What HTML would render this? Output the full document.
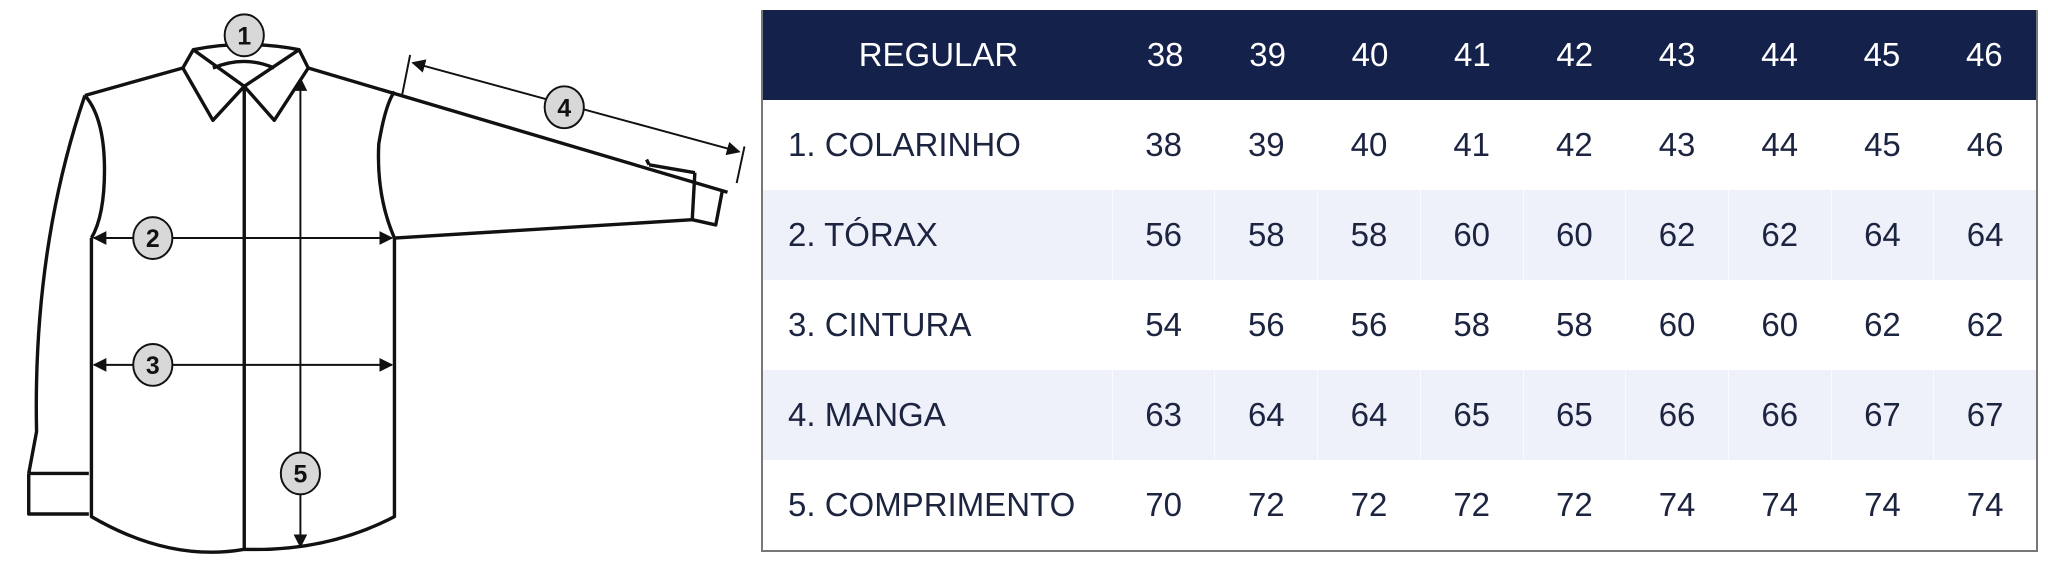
<!DOCTYPE html>
<html><head><meta charset="utf-8"><style>
html,body{margin:0;padding:0;background:#fff;width:2048px;height:565px;overflow:hidden;position:relative}
svg.shirt{position:absolute;left:0;top:0}
.tbl{position:absolute;left:761px;top:10px;width:1273px;height:540px;border-left:2px solid #777;border-right:2px solid #777;border-bottom:2px solid #777;box-sizing:content-box;font-family:"Liberation Sans",sans-serif}
.row{display:flex;height:90px;align-items:stretch}
.row div{display:flex;align-items:center;justify-content:center;width:102.4px;font-size:33px;color:#1c2440;border-left:1px solid rgba(255,255,255,0.7)}
.row div.l{width:351px;justify-content:flex-start;padding-left:25px;box-sizing:border-box;border-left:none}
.hd{background:#14224b}
.hd div{color:#fff;border-left:none!important}
.hd div.l{justify-content:center;padding-left:0}
.st{background:#eef0fa}
</style></head><body>
<svg class="shirt" width="2048" height="565" viewBox="0 0 1568 432" preserveAspectRatio="none">
<defs><marker id="a" viewBox="0 0 10 10" refX="9" refY="5" markerWidth="7" markerHeight="7" orient="auto-start-reverse"><path d="M0,0 L10,5 L0,10 z" fill="#111"/></marker></defs>
<g fill="none" stroke="#111" stroke-width="2.6" stroke-linejoin="round">
<path d="M148,38 Q187,30 229,38 L236,52 L210,92 L187,66 L163,92 L140,52 Z"/>
<path d="M148,38 L187,66 L229,38"/>
<path d="M163,52 Q187,42 210,52"/>
<path d="M140,52 L65,73"/>
<path d="M236,52 L557,147"/>
<path d="M65,73 Q25,190 28,330 L22,362"/>
<path d="M65,73 Q80,90 80,130 Q80,165 70,182"/>
<path d="M22,362 L68,362 M22,362 L22,393 L68,393"/>
<path d="M70,182 L70,395 Q130,430 187,420 Q250,422 302,395 L302,182"/>
<path d="M302,182 Q288,150 290,110 Q295,80 302,70"/>
<path d="M302,182 L530,168 L548,172 L553,146"/>
<path d="M530,168 L532,132"/>
<path d="M187,66 L187,420"/>
<path d="M497,126 L532,132 M495,122 L497,126"/>
</g>
<g stroke="#111" stroke-width="1.5" fill="none">
<line x1="230" y1="60" x2="230" y2="418" marker-start="url(#a)" marker-end="url(#a)"/>
<line x1="72" y1="182" x2="300" y2="182" marker-start="url(#a)" marker-end="url(#a)"/>
<line x1="72" y1="279" x2="300" y2="279" marker-start="url(#a)" marker-end="url(#a)"/>
<line x1="316" y1="48" x2="566" y2="116" marker-start="url(#a)" marker-end="url(#a)"/>
<line x1="314" y1="42" x2="308" y2="72"/>
<line x1="570" y1="112" x2="564" y2="140"/>
</g>
<g font-family="Liberation Sans,sans-serif" font-weight="bold" font-size="19" text-anchor="middle" fill="#111">
<ellipse cx="187" cy="27" rx="15" ry="16" fill="#d8d8d8" stroke="#111" stroke-width="1.5"/><text x="187" y="34">1</text>
<ellipse cx="117" cy="182" rx="15" ry="16" fill="#d8d8d8" stroke="#111" stroke-width="1.5"/><text x="117" y="189">2</text>
<ellipse cx="117" cy="279" rx="15" ry="16" fill="#d8d8d8" stroke="#111" stroke-width="1.5"/><text x="117" y="286">3</text>
<ellipse cx="432" cy="82" rx="15" ry="16" fill="#d8d8d8" stroke="#111" stroke-width="1.5"/><text x="432" y="89">4</text>
<ellipse cx="230" cy="362" rx="15" ry="16" fill="#d8d8d8" stroke="#111" stroke-width="1.5"/><text x="230" y="369">5</text>
</g>
</svg>
<div class="tbl">
<div class="row hd"><div class="l">REGULAR</div><div>38</div><div>39</div><div>40</div><div>41</div><div>42</div><div>43</div><div>44</div><div>45</div><div>46</div></div>
<div class="row"><div class="l">1. COLARINHO</div><div>38</div><div>39</div><div>40</div><div>41</div><div>42</div><div>43</div><div>44</div><div>45</div><div>46</div></div>
<div class="row st"><div class="l">2. TÓRAX</div><div>56</div><div>58</div><div>58</div><div>60</div><div>60</div><div>62</div><div>62</div><div>64</div><div>64</div></div>
<div class="row"><div class="l">3. CINTURA</div><div>54</div><div>56</div><div>56</div><div>58</div><div>58</div><div>60</div><div>60</div><div>62</div><div>62</div></div>
<div class="row st"><div class="l">4. MANGA</div><div>63</div><div>64</div><div>64</div><div>65</div><div>65</div><div>66</div><div>66</div><div>67</div><div>67</div></div>
<div class="row"><div class="l">5. COMPRIMENTO</div><div>70</div><div>72</div><div>72</div><div>72</div><div>72</div><div>74</div><div>74</div><div>74</div><div>74</div></div>
</div>
</body></html>
